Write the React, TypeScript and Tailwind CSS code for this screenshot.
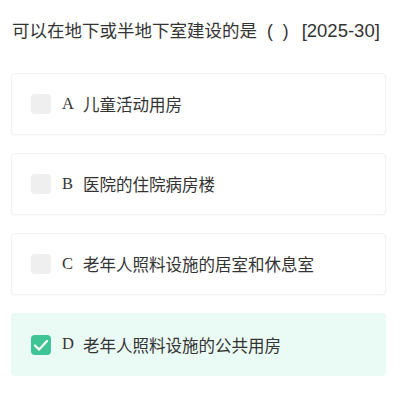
import React from "react";

const options = [
  { key: "A", text: "儿童活动用房", checked: false },
  { key: "B", text: "医院的住院病房楼", checked: false },
  { key: "C", text: "老年人照料设施的居室和休息室", checked: false },
  { key: "D", text: "老年人照料设施的公共用房", checked: true },
];

const latin = { fontFamily: '"Liberation Sans", Arial, sans-serif' };

export default function App() {
  return (
    <div
      className="w-[404px] h-[402px] bg-white overflow-hidden"
      style={{ fontFamily: '"Noto Sans CJK SC", "Noto Sans", sans-serif' }}
    >
      <div className="pt-[17px] pl-[12px] h-[73px]">
        <p className="text-[17.5px] leading-[26px] text-[#333333] whitespace-nowrap flex items-baseline">
          <span>可以在地下或半地下室建设的是</span>
          <span className="ml-[10px]" style={latin}>(</span>
          <span className="ml-[10px]" style={latin}>)</span>
          <span className="ml-[13px] text-[18.5px]" style={latin}>[2025-30]</span>
        </p>
      </div>
      <div className="flex flex-col gap-[18px] pl-[11px] w-[386px]">
        {options.map((o) => (
          <div
            key={o.key}
            className={
              o.checked
                ? "h-[63px] rounded-[4px] bg-[#eafaf4] flex items-center pl-[20px]"
                : "h-[62px] rounded-[4px] bg-white border border-[#f2f2f2] shadow-[0_1px_2px_rgba(0,0,0,0.03)] flex items-center pl-[19px]"
            }
          >
            {o.checked ? (
              <div className="w-[20px] h-[20px] rounded-[4px] bg-[#3ec495] flex items-center justify-center">
                <svg width="20" height="20" viewBox="0 0 20 20" fill="none">
                  <path
                    d="M4 10.5 L8.2 14.6 L16 6"
                    stroke="white"
                    strokeWidth="2.2"
                    strokeLinecap="round"
                    strokeLinejoin="round"
                  />
                </svg>
              </div>
            ) : (
              <div className="w-[20px] h-[20px] rounded-[4px] bg-[#efefef]" />
            )}
            <span
              className="ml-[11px] text-[16.5px] text-[#333333] w-[21px]"
              style={{ fontFamily: '"Liberation Serif", "DejaVu Serif", serif' }}
            >
              {o.key}
            </span>
            <span className="text-[16.5px] text-[#333333] leading-[24px]">{o.text}</span>
          </div>
        ))}
      </div>
    </div>
  );
}
